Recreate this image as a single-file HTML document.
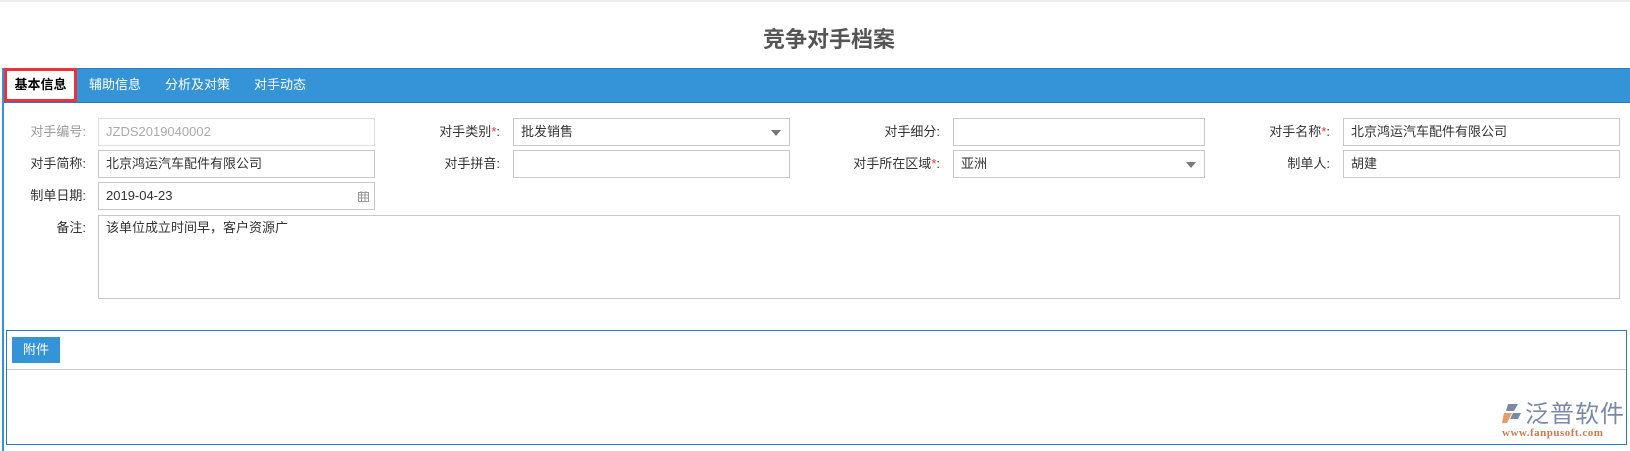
<!DOCTYPE html>
<html><head><meta charset="utf-8"><style>
*{box-sizing:border-box;margin:0;padding:0}
body{width:1630px;height:451px;background:#fff;position:relative;overflow:hidden;font-family:"Liberation Sans","Noto Sans CJK SC",sans-serif;font-size:13px;color:#333}
.abs{position:absolute}
.top{left:0;top:0;width:1630px;height:2px;background:#eee}
.title{left:0;width:1658px;top:22px;text-align:center;font-size:22px;font-weight:bold;color:#555}
.bar{left:2px;top:68px;width:1628px;height:35px;background:#3593d8;border-top:1px solid #2a7cc0;border-bottom:1px solid #2a7cc0}
.vline{left:2px;top:68px;width:2px;height:383px;background:#3593d8}
.tab{top:68px;height:35px;line-height:33px;color:#fff;font-size:13px}
.act{left:4px;top:68px;width:73px;height:34px;border:3px solid #e8333a;background:#fff;color:#000;font-weight:bold;text-align:center;line-height:28px}
.lbl{text-align:right;height:28px;line-height:28px;color:#333}
.inp{height:28px;border:1px solid #c8c8c8;background:#fff;line-height:26px;padding-left:7px;color:#333}
.star{color:#e8333a}
.arr{position:absolute;right:8px;top:11px;width:0;height:0;border-left:5px solid transparent;border-right:5px solid transparent;border-top:6px solid #777}
</style></head><body>
<div class="abs top"></div>
<div class="abs title">竞争对手档案</div>
<div class="abs bar"></div>
<div class="abs vline"></div>
<div class="abs act">基本信息</div>
<div class="abs tab" style="left:89px">辅助信息</div>
<div class="abs tab" style="left:165px">分析及对策</div>
<div class="abs tab" style="left:254px">对手动态</div>

<div class="abs lbl" style="left:0;width:86px;top:118px;color:#999">对手编号:</div>
<div class="abs inp" style="left:98px;width:277px;top:118px;color:#aaa;border-color:#ddd">JZDS2019040002</div>
<div class="abs lbl" style="left:400px;width:100px;top:118px">对手类别<span class="star">*</span>:</div>
<div class="abs inp" style="left:513px;width:277px;top:118px">批发销售<span class="arr"></span></div>
<div class="abs lbl" style="left:820px;width:120px;top:118px">对手细分:</div>
<div class="abs inp" style="left:953px;width:252px;top:118px"></div>
<div class="abs lbl" style="left:1230px;width:100px;top:118px">对手名称<span class="star">*</span>:</div>
<div class="abs inp" style="left:1343px;width:277px;top:118px">北京鸿运汽车配件有限公司</div>

<div class="abs lbl" style="left:0;width:86px;top:150px">对手简称:</div>
<div class="abs inp" style="left:98px;width:277px;top:150px">北京鸿运汽车配件有限公司</div>
<div class="abs lbl" style="left:400px;width:100px;top:150px">对手拼音:</div>
<div class="abs inp" style="left:513px;width:277px;top:150px"></div>
<div class="abs lbl" style="left:800px;width:140px;top:150px">对手所在区域<span class="star">*</span>:</div>
<div class="abs inp" style="left:953px;width:252px;top:150px">亚洲<span class="arr"></span></div>
<div class="abs lbl" style="left:1230px;width:100px;top:150px">制单人:</div>
<div class="abs inp" style="left:1343px;width:277px;top:150px">胡建</div>

<div class="abs lbl" style="left:0;width:86px;top:182px">制单日期:</div>
<div class="abs inp" style="left:98px;width:277px;top:182px">2019-04-23
<svg style="position:absolute;right:5px;top:8px" width="11" height="11" viewBox="0 0 11 11"><rect x="0.5" y="1.5" width="10" height="9" fill="none" stroke="#999"/><path d="M0 4h11M3.5 1.5v9M7 1.5v9M0 7h11" stroke="#999"/><path d="M3 0v2M8 0v2" stroke="#999"/></svg></div>

<div class="abs lbl" style="left:0;width:86px;top:214px">备注:</div>
<div class="abs inp" style="left:98px;width:1522px;top:215px;height:84px;line-height:20px;padding-top:2px">该单位成立时间早，客户资源广</div>

<div class="abs" style="left:6px;top:330px;width:1621px;height:115px;border:1px solid #2a7cc0"></div>
<div class="abs" style="left:12px;top:337px;width:48px;height:26px;background:#3593d8;color:#fff;text-align:center;line-height:26px">附件</div>
<div class="abs" style="left:7px;top:369px;width:1619px;height:1px;background:#ccc"></div>

<svg class="abs" style="left:1500px;top:402px" width="24" height="24" viewBox="0 0 24 24"><path d="M8 2h10l-4 7H6z" fill="#7a8aa5"/><path d="M4 11h8l-5 10H2z" fill="#e89a6a"/><path d="M13 11h8l-3 6h-8z" fill="#7a8aa5"/></svg>
<div class="abs" style="left:1525px;top:398px;font-size:24px;color:#7a8aa5;letter-spacing:1px;font-family:'Noto Sans CJK SC',sans-serif;line-height:28px">泛普软件</div>
<div class="abs" style="left:1502px;top:427px;font-size:11px;color:#d07a50;font-family:'Liberation Serif',serif;font-weight:bold;letter-spacing:0.5px">www.fanpusoft.com</div>
</body></html>
